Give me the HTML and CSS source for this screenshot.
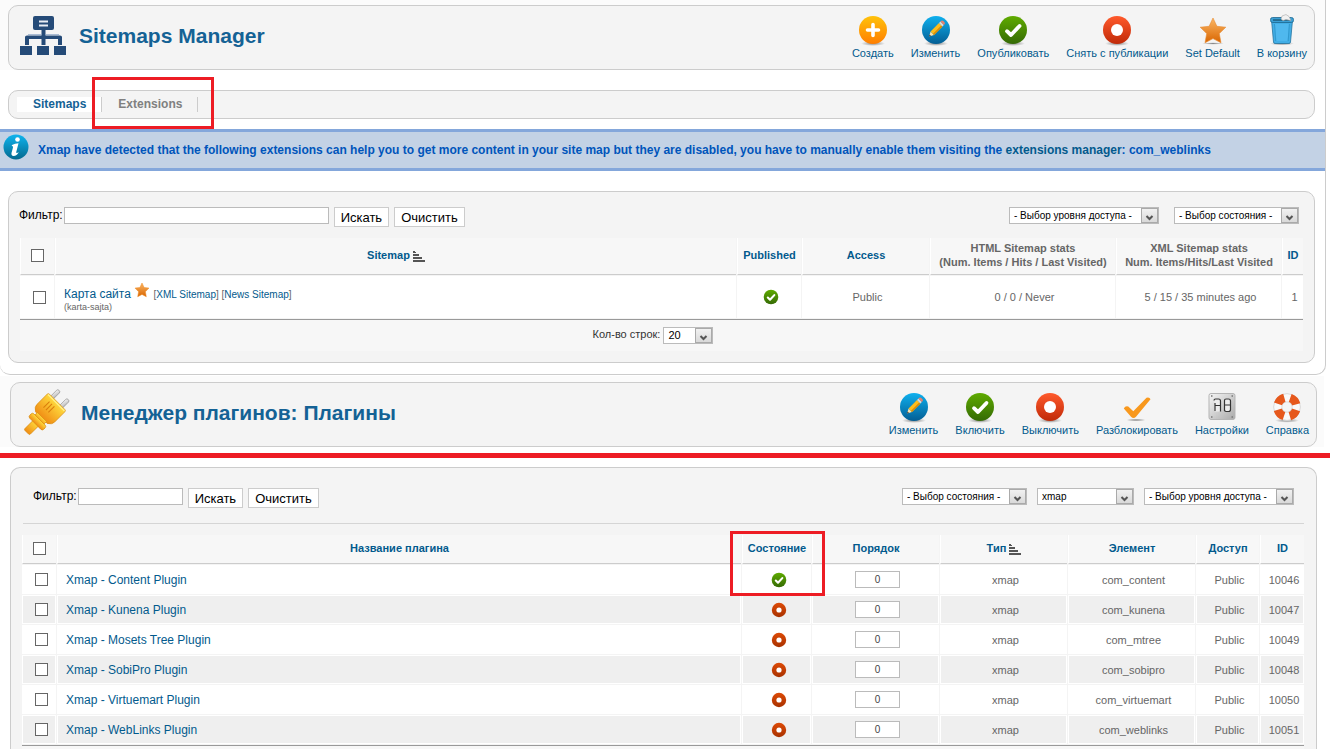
FILE: index.html
```html
<!DOCTYPE html>
<html lang="ru">
<head>
<meta charset="utf-8">
<title>Sitemaps Manager</title>
<link rel="stylesheet" href="styles.css">
</head>
<body>
<svg class="sprite" aria-hidden="true">
  <defs>
    <linearGradient id="g-orange" x1="0" y1="0" x2="0" y2="1"><stop offset="0" stop-color="#ffc20a"/><stop offset="1" stop-color="#ff7e00"/></linearGradient>
    <linearGradient id="g-blue" x1="0" y1="0" x2="0" y2="1"><stop offset="0" stop-color="#0fb0ee"/><stop offset="1" stop-color="#045e94"/></linearGradient>
    <linearGradient id="g-green" x1="0" y1="0" x2="0" y2="1"><stop offset="0" stop-color="#5fab00"/><stop offset="1" stop-color="#356a05"/></linearGradient>
    <linearGradient id="g-red" x1="0" y1="0" x2="0" y2="1"><stop offset="0" stop-color="#ff5a2c"/><stop offset="1" stop-color="#c02a08"/></linearGradient>
    <linearGradient id="g-brick" x1="0" y1="0" x2="0" y2="1"><stop offset="0" stop-color="#dd4a06"/><stop offset="1" stop-color="#a83200"/></linearGradient>
    <linearGradient id="g-star" x1="0" y1="0" x2="0" y2="1"><stop offset="0" stop-color="#fbb765"/><stop offset="1" stop-color="#d96500"/></linearGradient>
    <linearGradient id="g-info" x1="0" y1="0" x2="0" y2="1"><stop offset="0" stop-color="#0fb4ee"/><stop offset="1" stop-color="#04698f"/></linearGradient>
    <linearGradient id="g-plug" x1="0" y1="0" x2="0" y2="1"><stop offset="0" stop-color="#ffdc3e"/><stop offset="1" stop-color="#f08c14"/></linearGradient>
    <linearGradient id="g-metal" x1="0" y1="0" x2="1" y2="1"><stop offset="0" stop-color="#f6f6f6"/><stop offset="1" stop-color="#a9a9a9"/></linearGradient>
    <radialGradient id="g-shadow"><stop offset="0" stop-color="#000" stop-opacity=".45"/><stop offset="1" stop-color="#000" stop-opacity="0"/></radialGradient>
  </defs>
  <symbol id="i-new" viewBox="0 0 32 32"><ellipse cx="16" cy="29.5" rx="12" ry="2.5" fill="url(#g-shadow)"/><circle cx="16" cy="16" r="14" fill="url(#g-orange)"/><path d="M16 10.500v11M10.500 16h11" stroke="#fff" stroke-width="3.600" stroke-linecap="round"/></symbol>
  <symbol id="i-edit" viewBox="0 0 32 32"><ellipse cx="16" cy="29.5" rx="12" ry="2.5" fill="url(#g-shadow)"/><circle cx="16" cy="16" r="14" fill="url(#g-blue)"/><path d="M9 22.500l1.600-5 3.400 3.400z" fill="#fbe3b0"/><path d="M9 22.500l.6-2 1.400 1.400z" fill="#333"/><path d="M10.600 17.500l8.400-8.400 3.400 3.400-8.400 8.400z" fill="#fdbd1c"/><path d="M13 19.800l8.200-8.300 1.200 1.200-8.400 8.400z" fill="#d98c0a"/><path d="M19 9.100l1.500-1.500 3.400 3.400-1.500 1.500z" fill="#d5d9dc"/><path d="M20.500 7.600l.8-.8q1-.8 2 .2l1.200 1.200q.9 1 0 2l-.6.8z" fill="#e8806c"/></symbol>
  <symbol id="i-publish" viewBox="0 0 32 32"><ellipse cx="16" cy="29.5" rx="12" ry="2.5" fill="url(#g-shadow)"/><circle cx="16" cy="16" r="14" fill="url(#g-green)"/><path d="M10 17.200l4 3.800 8.500-9" fill="none" stroke="#fff" stroke-width="3.800" stroke-linecap="round" stroke-linejoin="round"/></symbol>
  <symbol id="i-unpublish" viewBox="0 0 32 32"><ellipse cx="16" cy="29.5" rx="12" ry="2.5" fill="url(#g-shadow)"/><circle cx="16" cy="16" r="14" fill="url(#g-red)"/><circle cx="16" cy="16" r="6" fill="#fff"/></symbol>
  <symbol id="i-star" viewBox="0 0 32 32"><ellipse cx="16" cy="29.500" rx="11" ry="1.200" fill="url(#g-shadow)"/><path d="M16 4l3.900 8.300 8.900.9-6.500 6.400 1.700 9.200-8-4.200-8 4.200 1.700-9.200-6.500-6.400 8.900-.9z" fill="url(#g-star)" stroke="#e58a30" stroke-width=".6" stroke-linejoin="round"/></symbol>
  <symbol id="i-star-small" viewBox="0 0 16 16"><path d="M8 1l2.100 4.500 4.900.6-3.600 3.600.9 5L8 12.400 3.700 14.700l.9-5L1 6.100l4.900-.6z" fill="url(#g-star)" stroke="#ee8a22" stroke-width=".5" stroke-linejoin="round"/></symbol>
  <symbol id="i-trash" viewBox="0 0 32 32"><ellipse cx="16" cy="29.500" rx="12" ry="2" fill="url(#g-shadow)"/><path d="M5.500 6l2 22q.2 1.500 1.500 1.500h14q1.300 0 1.500-1.500L26.500 6z" fill="#42aee6" stroke="#23749f" stroke-width=".8"/><path d="M9 10h14l-1.500 17h-11z" fill="#4fb8ee"/><path d="M8.500 10l1.200 17M23.400 10l-1.200 17" stroke="#2c93c8" stroke-width=".8"/><rect x="4.500" y="3.500" width="23" height="5" rx="2" fill="#3a9fd5" stroke="#1d678f" stroke-width=".8"/><path d="M7 5.300h18v1.500H7z" fill="#1f607f"/><path d="M15 5l1-3 4-1.500 3 2 2 4-5-1-3 1z" fill="#f1f1f1" stroke="#aaa" stroke-width=".6"/></symbol>
  <symbol id="i-check" viewBox="0 0 32 32"><ellipse cx="15" cy="29" rx="10" ry="1.500" fill="url(#g-shadow)"/><path d="M2.800 17.500q1.500-3 4.500-2l5 4.800L25.500 6.800q3-1 4 1.500L15 25.800q-2.500 2.500-5 0z" fill="#f8981d"/></symbol>
  <symbol id="i-options" viewBox="0 0 32 32"><rect x="3" y="2.500" width="26" height="26" rx="2" fill="url(#g-metal)" stroke="#b5b5b5"/><path d="M5 5h1.500M25.500 5H27M5 26h1.500M25.500 26H27" stroke="#777" stroke-width="1.500"/><rect x="8.500" y="7.500" width="6" height="13" rx="1.500" fill="#ededed"/><rect x="18.500" y="7.500" width="6" height="13" rx="1.500" fill="#ededed"/><path d="M8 9.500q0-1.500 1.500-1.500h3q2 0 2 2v10.500M9 20V12M9 14.500h5.500M18.500 20V9.500q0-1.500 1.500-1.500h2.500q2 0 2 2v8.500q0 2-2 2H20q-1.500 0-1.500-2M19 14h5.500" fill="none" stroke="#333" stroke-width="1.200"/></symbol>
  <symbol id="i-help" viewBox="0 0 32 32"><ellipse cx="16" cy="29.500" rx="12" ry="2.200" fill="url(#g-shadow)"/><circle cx="16" cy="16" r="9.500" fill="none" stroke="#f9f9f9" stroke-width="8.500"/><circle cx="16" cy="16" r="13.400" fill="none" stroke="#d0d0d0" stroke-width=".8"/><circle cx="16" cy="16" r="9.500" fill="none" stroke="#e6581c" stroke-width="8.500" stroke-dasharray="9 5.922" stroke-dashoffset="-2.960"/><circle cx="16" cy="16" r="5.200" fill="none" stroke="#c9c9c9" stroke-width=".6"/></symbol>
  <symbol id="i-on" viewBox="0 0 16 16"><circle cx="8" cy="8" r="7.300" fill="url(#g-green)"/><path d="M4.800 8.500l2.200 2.200 4.300-4.600" fill="none" stroke="#fff" stroke-width="2.100" stroke-linecap="round" stroke-linejoin="round"/></symbol>
  <symbol id="i-off" viewBox="0 0 16 16"><circle cx="8" cy="8" r="7.200" fill="url(#g-brick)"/><circle cx="8" cy="8" r="2.600" fill="#fff"/></symbol>
  <symbol id="i-sort" viewBox="0 0 12 11"><path d="M0 0h2v1H0zM0 1h3v1H0zM0 3h6v2H0zM0 6h9v2H0zM0 9h12v2H0z" fill="#555"/></symbol>
</svg>

<section class="screen screen-sitemaps">
  <div class="strip">
    <header class="panel title-bar">
      <div class="title">
        <svg class="title-icon" viewBox="0 0 48 48" aria-hidden="true"><g fill="#254b78"><rect x="14" y="4" width="21" height="14" rx="2"/><path d="M22.500 18h4v7h-4zM6 25q0-1.500 2-1.500h33q2 0 2 1.500v8h-4v-6H10v6H6zM22.500 26h4v7h-4z"/><rect x="1" y="34" width="12" height="9"/><rect x="18" y="34" width="12" height="9"/><rect x="35" y="34" width="12" height="9"/></g><path d="M20 9.500h9M20 13.500h9" stroke="#e9eef5" stroke-width="2"/><path d="M9 22.500h13M27 22.500h13" stroke="#a9bbd3"/></svg>
        <h2>Sitemaps Manager</h2>
      </div>
      <nav class="toolbar">
        <a href="#"><svg><use href="#i-new"/></svg>Создать</a>
        <a href="#"><svg><use href="#i-edit"/></svg>Изменить</a>
        <a href="#"><svg><use href="#i-publish"/></svg>Опубликовать</a>
        <a href="#"><svg><use href="#i-unpublish"/></svg>Снять с публикации</a>
        <a href="#"><svg><use href="#i-star"/></svg>Set Default</a>
        <a href="#"><svg><use href="#i-trash"/></svg>В корзину</a>
      </nav>
    </header>
  </div>

  <nav class="panel tabs">
    <a class="tab active" href="#">Sitemaps</a>
    <a class="tab" href="#">Extensions<span class="mark mark-tab"></span></a>
  </nav>

  <div class="message">
    <svg class="message-icon" viewBox="0 0 26 26" aria-hidden="true"><circle cx="13" cy="13" r="12.500" fill="url(#g-info)"/><circle cx="14.500" cy="5.500" r="2.300" fill="#fff"/><path d="M9 11q3-1.500 6.500-1.800l-2.300 9q-.2 1.500 2.600 0-1.900 3.700-5.300 3.700-2.500-.2-2-2.900l1.500-5.500q.2-1.500-1.300-1.800z" fill="#fff"/></svg>
    <p>Xmap have detected that the following extensions can help you to get more content in your site map but they are disabled, you have to manually enable them visiting the <a href="#">extensions manager</a>: com_weblinks</p>
  </div>

  <main class="panel card">
    <form class="filters">
      <label for="search-a">Фильтр:</label><input class="search wide" id="search-a" type="text">
      <button class="btn" type="button">Искать</button>
      <button class="btn" type="button">Очистить</button>
      <div class="selects">
        <select class="pick access" aria-label="Уровень доступа"><option>- Выбор уровня доступа -</option></select>
        <select class="pick state" aria-label="Состояние"><option>- Выбор состояния -</option></select>
      </div>
    </form>
    <table class="grid tall">
      <colgroup><col class="c-check"><col><col class="c-published"><col class="c-mid"><col class="c-html"><col class="c-xml"><col class="c-id"></colgroup>
      <thead>
        <tr>
          <th><input type="checkbox" aria-label="Выбрать все"></th>
          <th><a href="#">Sitemap</a> <svg class="sort"><use href="#i-sort"/></svg></th>
          <th><a href="#">Published</a></th>
          <th><a href="#">Access</a></th>
          <th>HTML Sitemap stats<br>(Num. Items / Hits / Last Visited)</th>
          <th>XML Sitemap stats<br>Num. Items/Hits/Last Visited</th>
          <th><a href="#">ID</a></th>
        </tr>
      </thead>
      <tbody>
        <tr>
          <td><input type="checkbox" aria-label="Карта сайта"></td>
          <td class="name"><a href="#">Карта сайта</a> <svg class="mini-star"><use href="#i-star-small"/></svg> <small>[<a href="#">XML Sitemap</a>] [<a href="#">News Sitemap</a>]</small><span class="alias">(karta-sajta)</span></td>
          <td><svg class="status"><use href="#i-on"/></svg></td>
          <td>Public</td>
          <td>0 / 0 / Never</td>
          <td>5 / 15 / 35 minutes ago</td>
          <td>1</td>
        </tr>
      </tbody>
      <tfoot>
        <tr><td colspan="7"><label for="limit">Кол-во строк:</label> <select class="pick limit" id="limit"><option>20</option></select></td></tr>
      </tfoot>
    </table>
  </main>
</section>

<section class="screen-plugins">
  <div class="strip">
    <header class="panel title-bar">
      <div class="title">
        <svg class="title-icon" viewBox="0 0 48 48" aria-hidden="true"><g transform="translate(24 25) rotate(45) scale(.86) translate(-23.500 -25)"><g fill="url(#g-metal)" stroke="#888" stroke-width=".7"><rect x="13.500" y="-6" width="4.500" height="17" rx="2"/><rect x="28.500" y="-6" width="4.500" height="17" rx="2"/></g><g fill="url(#g-plug)" stroke="#d88a0c" stroke-width=".8"><rect x="19" y="39" width="9" height="16" rx="1.500"/><path d="M9 7q0-2 2-2h25q2 0 2 2v17q0 4-5 7H14q-5-3-5-7z"/><path d="M16 30h15v6H16z"/><rect x="12" y="34" width="23" height="7" rx="2.500"/></g><path d="M10 6.500h27" stroke="#fff08c" stroke-width="1.500"/><path d="M17 11v10M21 11v10M25 11v10" stroke="#db7e0c" stroke-width="1.300"/></g></svg>
        <h2>Менеджер плагинов: Плагины</h2>
      </div>
      <nav class="toolbar">
        <a href="#"><svg><use href="#i-edit"/></svg>Изменить</a>
        <a href="#"><svg><use href="#i-publish"/></svg>Включить</a>
        <a href="#"><svg><use href="#i-unpublish"/></svg>Выключить</a>
        <a href="#"><svg><use href="#i-check"/></svg>Разблокировать</a>
        <a href="#"><svg><use href="#i-options"/></svg>Настройки</a>
        <a href="#"><svg><use href="#i-help"/></svg>Справка</a>
      </nav>
    </header>
  </div>
  <hr class="divider">
  <main class="panel card card-open">
    <form class="filters">
      <label for="search-b">Фильтр:</label><input class="search" id="search-b" type="text">
      <button class="btn" type="button">Искать</button>
      <button class="btn" type="button">Очистить</button>
      <div class="selects">
        <select class="pick state" aria-label="Состояние"><option>- Выбор состояния -</option></select>
        <select class="pick type" aria-label="Тип"><option>xmap</option></select>
        <select class="pick access" aria-label="Уровень доступа"><option>- Выбор уровня доступа -</option></select>
      </div>
    </form>
    <table class="grid striped">
      <colgroup><col class="c-check"><col><col class="c-state"><col class="c-mid"><col class="c-mid"><col class="c-mid"><col class="c-access"><col class="c-num"></colgroup>
      <thead>
        <tr>
          <th><input type="checkbox" aria-label="Выбрать все"></th>
          <th><a href="#">Название плагина</a></th>
          <th><a href="#">Состояние</a><span class="mark mark-state"></span></th>
          <th><a href="#">Порядок</a></th>
          <th><a href="#">Тип</a> <svg class="sort"><use href="#i-sort"/></svg></th>
          <th><a href="#">Элемент</a></th>
          <th><a href="#">Доступ</a></th>
          <th><a href="#">ID</a></th>
        </tr>
      </thead>
      <tbody>
        <tr><td><input type="checkbox" aria-label="Content"></td><td class="name"><a href="#">Xmap - Content Plugin</a></td><td><svg class="status"><use href="#i-on"/></svg></td><td><input class="order" type="text" value="0" aria-label="Порядок"></td><td>xmap</td><td>com_content</td><td>Public</td><td>10046</td></tr>
        <tr><td><input type="checkbox" aria-label="Kunena"></td><td class="name"><a href="#">Xmap - Kunena Plugin</a></td><td><svg class="status"><use href="#i-off"/></svg></td><td><input class="order" type="text" value="0" aria-label="Порядок"></td><td>xmap</td><td>com_kunena</td><td>Public</td><td>10047</td></tr>
        <tr><td><input type="checkbox" aria-label="Mosets Tree"></td><td class="name"><a href="#">Xmap - Mosets Tree Plugin</a></td><td><svg class="status"><use href="#i-off"/></svg></td><td><input class="order" type="text" value="0" aria-label="Порядок"></td><td>xmap</td><td>com_mtree</td><td>Public</td><td>10049</td></tr>
        <tr><td><input type="checkbox" aria-label="SobiPro"></td><td class="name"><a href="#">Xmap - SobiPro Plugin</a></td><td><svg class="status"><use href="#i-off"/></svg></td><td><input class="order" type="text" value="0" aria-label="Порядок"></td><td>xmap</td><td>com_sobipro</td><td>Public</td><td>10048</td></tr>
        <tr><td><input type="checkbox" aria-label="Virtuemart"></td><td class="name"><a href="#">Xmap - Virtuemart Plugin</a></td><td><svg class="status"><use href="#i-off"/></svg></td><td><input class="order" type="text" value="0" aria-label="Порядок"></td><td>xmap</td><td>com_virtuemart</td><td>Public</td><td>10050</td></tr>
        <tr><td><input type="checkbox" aria-label="WebLinks"></td><td class="name"><a href="#">Xmap - WebLinks Plugin</a></td><td><svg class="status"><use href="#i-off"/></svg></td><td><input class="order" type="text" value="0" aria-label="Порядок"></td><td>xmap</td><td>com_weblinks</td><td>Public</td><td>10051</td></tr>
      </tbody>
      <tfoot><tr><td colspan="8"></td></tr></tfoot>
    </table>
  </main>
</section>
</body>
</html>
```
FILE: styles.css
```css
* { box-sizing: border-box; }

body {
  margin: 0;
  background: #fff;
  color: #666;
  font: 11px/14px "Liberation Sans", Arial, sans-serif;
}

a { color: #025a8d; text-decoration: none; }

.sprite { position: absolute; width: 0; height: 0; }

.panel {
  border: 1px solid #ccc;
  border-radius: 10px;
  background: #f4f4f4;
}

/* Screens */
.screen-sitemaps {
  margin-right: 4px;
  padding-bottom: 11px;
  border: 1px solid #ccc;
  border-width: 0 1px 1px 0;
  border-radius: 0 0 10px 10px;
}
.screen-sitemaps .strip { padding: 5px 10px 0 8px; }
.screen-plugins .strip { margin: 1px 6px 0 0; padding: 6px 7px 0 10px; }
.strip { background: #fbfbfb; }

/* Title bar */
.title-bar {
  display: flex;
  justify-content: space-between;
  height: 65px;
  padding: 0 7px 0 10px;
}
.title { display: flex; align-items: center; gap: 12px; padding-bottom: 4px; }
.title-icon { width: 48px; height: 48px; overflow: visible; }
.title h2 {
  margin: 0;
  color: #146295;
  font-size: 21px;
  line-height: 24px;
}
.toolbar { display: flex; gap: 17px; padding-top: 8px; }
.toolbar a {
  display: flex;
  flex-direction: column;
  align-items: center;
  white-space: nowrap;
}
.toolbar svg { width: 32px; height: 32px; }

/* Tabs */
.tabs {
  display: flex;
  align-items: center;
  height: 29px;
  margin: 20px 10px 0 8px;
  padding-left: 8px;
}
.tab {
  position: relative;
  padding: 0 15px 0 16px;
  border-right: 1px solid #ccc;
  color: #808080;
  font-size: 12px;
  font-weight: bold;
  line-height: 15px;
}
.tab.active { background: #fff; color: #146295; }

/* Red highlight frames drawn over the page */
.mark {
  position: absolute;
  z-index: 1;
  border: 3px solid #ed1c24;
  pointer-events: none;
}
.mark-tab { left: -10px; top: -20px; width: 122px; height: 52px; }
.mark-state { left: -13px; top: -4px; width: 95px; height: 65px; }

/* System message */
.message {
  display: flex;
  gap: 9px;
  min-height: 42px;
  margin-top: 10px;
  padding: 2px 3px;
  border: 3px solid #84a7db;
  border-width: 3px 0;
  background: #c3d2e5;
  color: #0055bb;
  font-size: 12px;
  font-weight: bold;
}
.message p { margin: 9px 0 0; }
.message-icon { flex: none; width: 26px; height: 26px; }

/* Cards and filters */
.card { margin: 20px 10px 0 8px; padding: 15px 10px 10px; }
.card-open {
  margin: 9px 13px 0 10px;
  padding: 20px 11px 0 10px;
  border-bottom: 0;
  border-radius: 10px 10px 0 0;
}
.filters { display: flex; align-items: flex-start; margin-bottom: 10px; color: #000; }
.filters label { margin-right: 1px; font-size: 12px; line-height: 16px; }
.card-open .filters {
  margin: 0 1px 10px 2px;
  padding: 0 10px 15px;
  border-bottom: 1px solid #d5d5d5;
}
.search {
  width: 105px;
  height: 17px;
  border: 1px solid #bbb;
  background: #fff;
}
.search.wide { width: 265px; }
.btn {
  height: 20px;
  margin-left: 5px;
  padding: 1px 6px 0;
  border: 1px solid #ccc;
  background: #fff;
  color: #000;
  font: 13px/16px "Liberation Sans", Arial, sans-serif;
}
.selects { display: flex; gap: 15px; margin-left: auto; padding-right: 5px; }
.card-open .selects { gap: 10px; padding-right: 0; }
.pick {
  appearance: none;
  height: 17px;
  padding: 0 18px 0 4px;
  border: 1px solid #bbb;
  border-radius: 0;
  background: #fff url("data:image/svg+xml,%3Csvg xmlns='http://www.w3.org/2000/svg' width='17' height='15'%3E%3ClinearGradient id='g' x2='0' y2='1'%3E%3Cstop stop-color='%23f2f2f2'/%3E%3Cstop offset='1' stop-color='%23d8d8d8'/%3E%3C/linearGradient%3E%3Crect x='.5' y='.5' width='16' height='14' fill='url(%23g)' stroke='%23aaa'/%3E%3Cpath d='M5.500 8l3 3 3-3' fill='none' stroke='%23555' stroke-width='2'/%3E%3C/svg%3E") right center no-repeat;
  color: #000;
  font: 10px/15px "Liberation Sans", Arial, sans-serif;
}
.access { width: 150px; }
.state { width: 125px; }
.type { width: 97px; }
.limit { width: 50px; font-size: 11px; vertical-align: middle; }

/* Data grids */
.grid {
  width: 100%;
  table-layout: fixed;
  border-collapse: separate;
  border-spacing: 1px;
}
.c-check { width: 34px; }
.c-published { width: 64px; }
.c-mid { width: 127px; }
.c-html { width: 185px; }
.c-xml { width: 165px; }
.c-id { width: 21px; }
.c-state { width: 69px; }
.c-access { width: 63px; }
.c-num { width: 44px; }
.grid th {
  position: relative;
  height: 29px;
  padding: 0 0 2px;
  border-left: 1px solid #fff;
  border-bottom: 1px solid #ccc;
  background: #f7f7f7;
  white-space: nowrap;
}
.grid td {
  height: 29px;
  padding: 0 3px 0 7px;
  border: 1px solid #fff;
  background: #fff;
  text-align: center;
}
.striped tbody tr:nth-child(even) td { background: #efefef; }
.tall th { height: 37px; }
.tall tbody td { height: 42px; }
.grid .name { padding-left: 8px; font-size: 12px; text-align: left; }
.name small { font-size: 10px; }
.alias { display: block; font-size: 9px; line-height: 10px; }
.grid tfoot td {
  height: 32px;
  padding-right: 24px;
  border: 0;
  border-top: 1px solid #999;
  background: #f7f7f7;
  color: #333;
}
.grid.striped tfoot td { height: 4px; }
.grid input[type="checkbox"] {
  appearance: none;
  display: block;
  width: 13px;
  height: 13px;
  margin: 0 auto;
  border: 1px solid #666;
  background: #fff;
}
.order {
  display: block;
  width: 45px;
  height: 17px;
  margin: 0 auto;
  padding: 0;
  border: 1px solid #bbb;
  background: #fff;
  color: #444;
  font: 10px/15px "Liberation Sans", Arial, sans-serif;
  text-align: center;
}
.status { display: block; width: 16px; height: 16px; margin: 0 auto; }
.sort { width: 12px; height: 11px; vertical-align: middle; }
.mini-star { width: 16px; height: 16px; }

.divider { height: 5px; margin: 6px 0 0; border: 0; background: #ed1c24; }
```
